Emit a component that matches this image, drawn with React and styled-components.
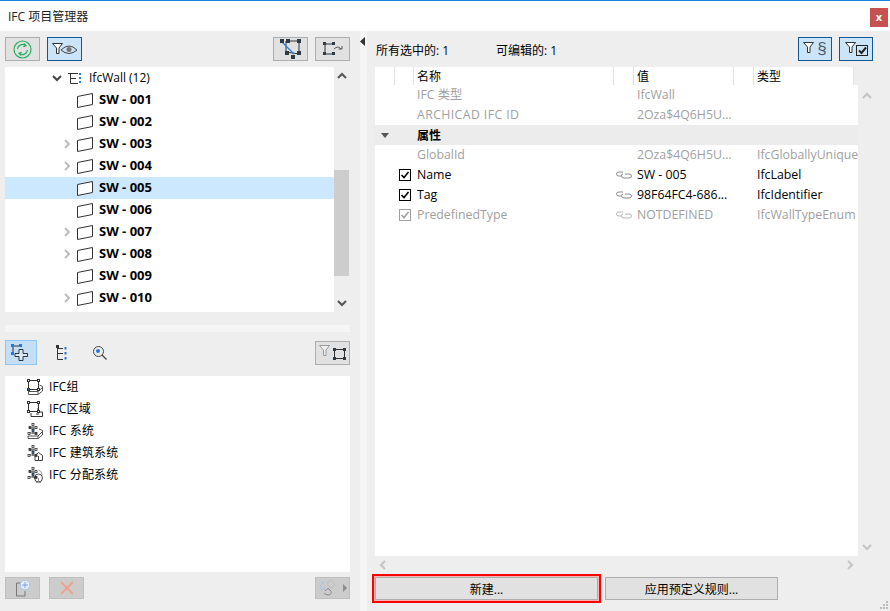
import React from 'react';
import styled, { createGlobalStyle } from 'styled-components';

const GlobalStyle = createGlobalStyle`
  html, body {
    margin: 0;
    padding: 0;
    background: #fff;
  }
  body {
    font-family: 'Open Sans', 'Noto Sans CJK SC', sans-serif;
    font-size: 12px;
    color: #000;
    overflow: hidden;
  }
`;

const Window = styled.div`
  position: relative;
  width: 890px;
  height: 611px;
  display: flex;
  flex-direction: column;
  border-top: 1px solid #1883d7;
  box-sizing: border-box;
  background: #eee;
`;

const TitleBar = styled.div`
  height: 30px;
  flex: none;
  background: #fff;
  display: flex;
  align-items: center;
  justify-content: space-between;
  padding: 0 2px 0 8px;
  color: #222;
`;

const CloseButton = styled.div`
  width: 18px;
  height: 19px;
  background: #c75050;
  color: #fff;
  font-weight: 700;
  font-size: 11px;
  line-height: 17px;
  text-align: center;
  margin-top: 3px;
`;

const Body = styled.div`
  flex: 1;
  display: flex;
  min-height: 0;
`;

const LeftPane = styled.div`
  width: 345px;
  flex: none;
  padding: 6px 10px 0 5px;
  display: flex;
  flex-direction: column;
`;

const Splitter = styled.div`
  width: 7px;
  flex: none;
  background: #f5f5f5;
  display: flex;
  justify-content: center;
  padding-top: 6px;
`;

const Toolbar = styled.div`
  display: flex;
  align-items: center;
  height: ${p => p.$height || 24}px;
  gap: ${p => p.$gap || 7}px;
  flex: none;
`;

const Spacer = styled.div`
  flex: 1;
`;

const ToolButton = styled.div`
  width: ${p => p.$width || 35}px;
  height: ${p => p.$height || 24}px;
  box-sizing: border-box;
  flex: none;
  display: flex;
  align-items: center;
  justify-content: center;
  border: 1px solid ${p => (p.$active ? '#0f5a96' : '#adadad')};
  background: ${p => (p.$active ? '#cce4f7' : '#e1e1e1')};
`;

const DisabledButton = styled(ToolButton)`
  height: 22px;
  background: #cccccc;
  border-color: #bfbfbf;
`;

const SectionMark = styled.span`
  font-family: 'Liberation Sans', sans-serif;
  font-size: 17px;
  line-height: 18px;
  color: #4a5a68;
  margin-left: 3px;
`;

const TabButton = styled.div`
  width: ${p => p.$width}px;
  height: 25px;
  flex: none;
  box-sizing: border-box;
  display: flex;
  align-items: center;
  justify-content: center;
  border: ${p => (p.$active ? '1px solid #8fc6f2' : 'none')};
  background: ${p => (p.$active ? '#c3def5' : 'transparent')};
`;

const TreePanel = styled.div`
  margin-top: 6px;
  height: 245px;
  flex: none;
  display: flex;
`;

const Tree = styled.div`
  flex: 1;
  background: #fff;
  overflow: hidden;
`;

const TreeRow = styled.div`
  height: 22px;
  display: flex;
  align-items: center;
  padding-left: ${p => p.$indent}px;
  background: ${p => (p.$selected ? '#cce8ff' : 'transparent')};
`;

const ChevronSlot = styled.div`
  width: ${p => p.$width}px;
  flex: none;
  display: flex;
  align-items: center;
`;

const RowLabel = styled.span`
  margin-left: ${p => p.$gap}px;
  margin-bottom: 1px;
  white-space: nowrap;
`;

const WallLabel = styled(RowLabel)`
  font-size: 13px;
  font-weight: 700;
  margin-bottom: 2px;
`;

const ListLabel = styled(RowLabel)`
  margin-bottom: 2px;
  letter-spacing: 0.15px;
`;

const ScrollColumn = styled.div`
  width: ${p => p.$width}px;
  flex: none;
  display: flex;
  flex-direction: column;
  align-items: stretch;
`;

const ScrollArrow = styled.div`
  height: 18px;
  flex: none;
  display: flex;
  align-items: center;
  justify-content: center;
  margin-top: ${p => (p.$bottom ? 'auto' : `${p.$inset || 0}px`)};
  margin-bottom: ${p => (p.$bottom ? `${p.$inset || 0}px` : '0')};
`;

const ScrollThumb = styled.div`
  height: 106px;
  width: 15px;
  background: #cdcdcd;
  margin-top: 85px;
`;

const SplitBand = styled.div`
  height: 7px;
  margin: 13px 0 8px;
  background: #f5f5f5;
  flex: none;
`;

const ListPanel = styled.div`
  margin-top: 11px;
  height: 196px;
  flex: none;
  background: #fff;
`;

const BottomBar = styled(Toolbar)`
  margin-top: 5px;
  height: 22px;
  gap: 9px;
`;

const RightPane = styled.div`
  flex: 1;
  display: flex;
  flex-direction: column;
  padding: 6px 0 0 8px;
  min-width: 0;
`;

const SummaryBar = styled.div`
  height: 24px;
  flex: none;
  display: flex;
  align-items: center;
  padding-right: 17px;
`;

const SummaryText = styled.span`
  width: ${p => p.$width}px;
  padding-left: 1px;
  box-sizing: border-box;
  margin-top: 2px;
`;

const SummaryButtons = styled.div`
  margin-left: auto;
  display: flex;
  gap: 7px;
`;

const TablePanel = styled.div`
  margin-top: 6px;
  display: flex;
  height: 507px;
  flex: none;
`;

const Table = styled.div`
  width: 483px;
  flex: none;
  display: flex;
  flex-direction: column;
`;

const columns = '20px 19px 200px 20px 100px 20px 1fr';

const HeaderRow = styled.div`
  height: 18px;
  width: 479px;
  flex: none;
  display: grid;
  grid-template-columns: ${columns};
  background: #fff;
`;

const HeaderCell = styled.div`
  border-right: 1px solid #e3e3e3;
  padding-left: 3px;
  line-height: 19px;
  overflow: hidden;
`;

const Rows = styled.div`
  flex: 1;
  background: #fff;
  overflow: hidden;
`;

const Row = styled.div`
  height: 20px;
  display: grid;
  grid-template-columns: ${columns};
  align-items: center;
  white-space: nowrap;
  background: ${p => (p.$band ? '#ececec' : 'transparent')};
  color: ${p => (p.$muted ? '#a0a0a0' : '#000')};
`;

const Cell = styled.div`
  padding: 0 0 2px 3px;
  overflow: hidden;
  display: flex;
  align-items: center;
  font-size: 12.3px;
  letter-spacing: ${p => p.$spacing || 0}px;
`;

const BandTitle = styled.div`
  padding-left: 3px;
  font-weight: 600;
`;

const WideCell = styled(Cell)`
  grid-column: span 2;
`;

const IconCell = styled.div`
  display: flex;
  align-items: center;
  justify-content: center;
`;

const HScroll = styled.div`
  width: 483px;
  height: 18px;
  flex: none;
  display: flex;
  align-items: center;
  justify-content: space-between;
  padding: 0 3px;
  box-sizing: border-box;
`;

const ActionBar = styled.div`
  display: flex;
  gap: 7px;
  margin-top: 3px;
`;

const ActionButton = styled.div`
  height: 23px;
  width: ${p => p.$width}px;
  box-sizing: border-box;
  flex: none;
  border: 1px solid #adadad;
  background: #e1e1e1;
  display: flex;
  align-items: center;
  justify-content: center;
  outline: ${p => (p.$marked ? '2px solid #f00' : 'none')};
  outline-offset: 1px;
  box-shadow: ${p => (p.$marked ? '0 0 0 1px #ffb4b4' : 'none')};
`;

const ResizeGrip = styled.svg`
  position: absolute;
  right: 1px;
  bottom: 1px;
`;

const SplitArrowIcon = styled.svg`
  margin-left: -2px;
`;

const Chevron = ({ dir = 'right', color = '#bdbdbd', size = 10, width = 2 }) => {
  const d = {
    right: 'M3 1 L7 5 L3 9',
    left: 'M7 1 L3 5 L7 9',
    up: 'M1 7 L5 3 L9 7',
    down: 'M1 3 L5 7 L9 3',
  }[dir];
  return (
    <svg width={size} height={size} viewBox="0 0 10 10" fill="none">
      <path d={d} stroke={color} strokeWidth={width} />
    </svg>
  );
};

const WallIcon = () => (
  <svg width="16" height="15" viewBox="0 0 16 15" fill="#fff" stroke="#333" strokeWidth="1">
    <path d="M0.5 3.5 L15.5 0.5 V11.5 L0.5 14.5 Z" />
  </svg>
);

const WallTypeIcon = () => (
  <svg width="13" height="11" viewBox="0 0 13 11" fill="none">
    <path d="M0 0.5 H10 M2.5 0.5 V10.5 H10 M2.5 5.5 H8" stroke="#333" />
    <path d="M12 0 V2 M12 4 V6 M12 8 V10" stroke="#1e7be0" strokeWidth="2" />
  </svg>
);

const RefreshIcon = () => (
  <svg width="19" height="19" viewBox="0 0 19 19" fill="none" stroke="#27ae60" strokeWidth="1.2">
    <circle cx="9.5" cy="9.5" r="8.5" />
    <path d="M4.5 9 A5 5 0 0 1 12.5 5.5 M11 3.5 L13 5.8 L10.3 6.6" />
    <path d="M14.5 10 A5 5 0 0 1 6.5 13.5 M8 15.5 L6 13.2 L8.7 12.4" />
  </svg>
);

const Funnel = ({ color = '#333' }) => (
  <path d="M0.5 0.5 H10.5 L7 5 V10.5 H4.5 V5 Z" fill="#fff" stroke={color} />
);

const FilterEyeIcon = () => (
  <svg width="26" height="13" viewBox="0 0 26 13" fill="none">
    <Funnel />
    <path d="M9 7 Q17 -1 25 7 Q17 14 9 7 Z" stroke="#444" />
    <circle cx="17" cy="6.5" r="2.5" fill="#777" />
  </svg>
);

const FunnelIcon = () => (
  <svg width="11" height="14" viewBox="0 0 11 14" fill="none">
    <Funnel />
  </svg>
);

const FilterCheckIcon = () => (
  <svg width="23" height="14" viewBox="0 0 23 14" fill="none">
    <Funnel />
    <rect x="11.5" y="3.5" width="11" height="10" fill="#cce4f7" stroke="#222" />
    <path d="M14 8.5 L16.5 11 L21 5.5" stroke="#222" strokeWidth="2" />
  </svg>
);

const Handle = ({ x, y, color = '#2b3a45', size = 3 }) => (
  <rect x={x} y={y} width={size} height={size} fill={color} />
);

const PolyEditIcon = () => (
  <svg width="21" height="20" viewBox="0 0 21 20" fill="none">
    <path d="M6 2 H19 V15 L6 13 Z" stroke="#333" />
    <path d="M1 2 L14 15" stroke="#2a7de1" strokeWidth="1.3" />
    <Handle x={0} y={0} size={4} />
    <Handle x={6} y={0} size={4} />
    <Handle x={17} y={0} size={4} />
    <Handle x={5} y={12} size={4} />
    <Handle x={17} y={12} size={4} />
    <Handle x={11} y={16} size={4} />
  </svg>
);

const PolyArrowIcon = () => (
  <svg width="20" height="14" viewBox="0 0 20 14" fill="none">
    <path d="M2 2 H11 M2 2 V12 H11" stroke="#333" />
    <Handle x={0} y={0} />
    <Handle x={9} y={0} />
    <Handle x={0} y={10} />
    <Handle x={9} y={10} />
    <path d="M11 7 Q15 3 18 7 M15.5 7 H19 V4" stroke="#555" />
  </svg>
);

const AddElementIcon = () => (
  <svg width="20" height="17" viewBox="0 0 20 17" fill="none">
    <path d="M2 2 H10 M2 2 V9" stroke="#333" />
    <Handle x={0} y={0} color="#1e7be0" />
    <Handle x={8} y={0} color="#1e7be0" />
    <Handle x={0} y={8} color="#1e7be0" />
    <path d="M8 5.5 H12 V9.5 H16.5 V12.5 H12 V16.5 H8 V12.5 H4 V9.5 H8 Z" fill="#d8e9f8" stroke="#333" />
  </svg>
);

const HierarchyIcon = () => (
  <svg width="11" height="15" viewBox="0 0 11 15" fill="none">
    <rect x="0" y="0" width="3" height="3" fill="#333" />
    <path d="M1.5 3 V14.5 H7 M1.5 8.5 H7 M1.5 3.5 H7" stroke="#333" />
    <path d="M9.5 2 V4.5 M9.5 7 V9.5 M9.5 12 V14.5" stroke="#1e7be0" strokeWidth="2" />
  </svg>
);

const SearchIcon = () => (
  <svg width="14" height="14" viewBox="0 0 14 14" fill="none">
    <circle cx="5.5" cy="5.5" r="5" stroke="#444" />
    <circle cx="5" cy="5" r="2" fill="#1e7be0" />
    <path d="M9 9 L13.5 13.5" stroke="#444" strokeWidth="1.2" />
  </svg>
);

const FilterNodesIcon = () => (
  <svg width="28" height="16" viewBox="0 0 28 16" fill="none">
    <path d="M0.5 0.5 H10.5 L7 5 V10.5 H4.5 V5 Z" fill="#f0f0f0" stroke="#999" />
    <path d="M15.5 4.5 H25.5 V13.5 H15.5 Z" stroke="#333" />
    <Handle x={14} y={3} size={3} />
    <Handle x={24} y={3} size={3} />
    <Handle x={14} y={12} size={3} />
    <Handle x={24} y={12} size={3} />
  </svg>
);

const Corners = ({ blue }) => (
  <>
    <rect x="1.5" y="1.5" width="10" height="9" stroke="#333" fill="none" />
    <rect x="0.5" y="0.5" width="2" height="2" stroke="#333" fill="#fff" />
    <rect x="10.5" y="0.5" width="2" height="2" stroke="#333" fill="#fff" />
    <rect x="0.5" y="9.5" width="2" height="2" stroke="#333" fill={blue ? '#1e7be0' : '#fff'} />
    <rect x="10.5" y="9.5" width="2" height="2" stroke="#333" fill="#fff" />
  </>
);

const Network = () => (
  <g stroke="#333" strokeWidth="0.8">
    <path d="M6 2 V11 M2 5 H10 M2 10 H10" fill="none" />
    <rect x="5" y="0.5" width="2" height="2" fill="#fff" />
    <rect x="2" y="3.5" width="2" height="2" fill="#444" />
    <rect x="8" y="3.5" width="2" height="2" fill="#fff" />
    <rect x="5" y="6.5" width="2" height="2" fill="#1e7be0" />
    <rect x="1" y="9.5" width="2" height="2" fill="#fff" />
    <rect x="8" y="9.5" width="2" height="2" fill="#444" />
  </g>
);

const GroupIcon = () => (
  <svg width="16" height="16" viewBox="0 0 16 16" fill="none">
    <path d="M1.5 11 V15.5 H11 L15.5 12 V7.5 L12.5 6 M1.5 12.5 H11 L15 9 M11 12.5 V15.5" stroke="#555" />
    <Corners blue />
  </svg>
);

const ZoneIcon = () => (
  <svg width="16" height="16" viewBox="0 0 16 16" fill="none">
    <path d="M4 12 V15.5 H15.5 V11 H11 V7 M9 13 H12" stroke="#333" />
    <Corners />
  </svg>
);

const SystemBoxIcon = () => (
  <svg width="16" height="16" viewBox="0 0 16 16" fill="none">
    <path d="M1 13 V15.5 H11 L15.5 12 V7.5 L12 6 M1 13 H11 L15 9 M11 13 V15.5" stroke="#555" />
    <Network />
  </svg>
);

const SystemHouseIcon = () => (
  <svg width="16" height="16" viewBox="0 0 16 16" fill="none">
    <path d="M8 15.5 H15.5 V10.5 L11.5 7.5 L8 10.5 Z M11.5 11 V15.5" stroke="#444" />
    <Network />
  </svg>
);

const SystemPipeIcon = () => (
  <svg width="16" height="16" viewBox="0 0 16 16" fill="none">
    <circle cx="11.5" cy="11" r="4" stroke="#444" />
    <path d="M9 15.5 H14 M11.5 3 Q15 4 15 8 M11.5 11 V15.5" stroke="#999" />
    <Network />
  </svg>
);

const NewItemIcon = () => (
  <svg width="16" height="17" viewBox="0 0 16 17" fill="none">
    <path d="M6 3 H1.5 V16 H10 V11" stroke="#777" />
    <circle cx="10" cy="5" r="4.8" fill="#e4eefa" stroke="#a8c4ea" />
    <path d="M7 5 H13 M10 2 V8" stroke="#7fa3d8" />
  </svg>
);

const DeleteIcon = () => (
  <svg width="14" height="14" viewBox="0 0 14 14" fill="none">
    <path d="M1 1 L13 13 M13 1 L1 13" stroke="#ef9f8c" strokeWidth="1.8" />
  </svg>
);

const MoreIcon = () => (
  <svg width="31" height="16" viewBox="0 0 31 16" fill="none">
    <path d="M7 2 A5 5 0 0 0 5 10 Q7 10 8 7" stroke="#a8c4ea" strokeWidth="1.2" />
    <circle cx="14" cy="4" r="3.5" stroke="#bdbdbd" />
    <path d="M8 11 Q11 7 13 10 Q16 13 12 15 Q8 15 7 13" stroke="#888" />
    <path d="M26 4 L30 8 L26 12 Z" fill="#8c8c8c" />
  </svg>
);

const LinkIcon = ({ color = '#8a8a8a' }) => (
  <svg width="16" height="8" viewBox="0 0 16 8" fill="none" stroke={color}>
    <path d="M7 1 H3 Q0.5 1 0.5 3 Q0.5 5 3 5 H5" />
    <path d="M9 3 H13 Q15.5 3 15.5 5 Q15.5 7 13 7 H8 Q5.5 7 5.5 5 Q5.5 3 7 3" />
  </svg>
);

const CheckBox = ({ muted }) => (
  <svg width="12" height="12" viewBox="0 0 12 12" fill="#fff">
    <rect x="0.5" y="0.5" width="11" height="11" stroke={muted ? '#a0a0a0' : '#000'} />
    <path d="M2.5 6 L5 8.5 L9.5 3" fill="none" stroke={muted ? '#a0a0a0' : '#000'} strokeWidth="1.6" />
  </svg>
);

const CollapseIcon = () => (
  <svg width="8" height="5" viewBox="0 0 8 5">
    <path d="M0 0 H8 L4 5 Z" fill="#555" />
  </svg>
);

const SplitArrow = () => (
  <SplitArrowIcon width="5" height="9" viewBox="0 0 5 9">
    <path d="M5 0 V9 L0 4.5 Z" fill="#333" />
  </SplitArrowIcon>
);

const walls = [
  { name: 'SW - 001' },
  { name: 'SW - 002' },
  { name: 'SW - 003', more: true },
  { name: 'SW - 004', more: true },
  { name: 'SW - 005', selected: true },
  { name: 'SW - 006' },
  { name: 'SW - 007', more: true },
  { name: 'SW - 008', more: true },
  { name: 'SW - 009' },
  { name: 'SW - 010', more: true },
];

const systems = [
  { name: 'IFC组', Icon: GroupIcon },
  { name: 'IFC区域', Icon: ZoneIcon },
  { name: 'IFC 系统', Icon: SystemBoxIcon },
  { name: 'IFC 建筑系统', Icon: SystemHouseIcon },
  { name: 'IFC 分配系统', Icon: SystemPipeIcon },
];

const App = () => (
  <>
    <GlobalStyle />
    <Window>
      <TitleBar>
        <span>IFC 项目管理器</span>
        <CloseButton>x</CloseButton>
      </TitleBar>
      <Body>
        <LeftPane>
          <Toolbar>
            <ToolButton><RefreshIcon /></ToolButton>
            <ToolButton $active><FilterEyeIcon /></ToolButton>
            <Spacer />
            <ToolButton><PolyEditIcon /></ToolButton>
            <ToolButton><PolyArrowIcon /></ToolButton>
          </Toolbar>
          <TreePanel>
            <Tree>
              <TreeRow $indent={47}>
                <ChevronSlot $width={16}><Chevron dir="down" color="#444" /></ChevronSlot>
                <WallTypeIcon />
                <RowLabel $gap={8}>IfcWall (12)</RowLabel>
              </TreeRow>
              {walls.map(wall => (
                <TreeRow key={wall.name} $indent={57} $selected={wall.selected}>
                  <ChevronSlot $width={15}>{wall.more && <Chevron />}</ChevronSlot>
                  <WallIcon />
                  <WallLabel $gap={6}>{wall.name}</WallLabel>
                </TreeRow>
              ))}
            </Tree>
            <ScrollColumn $width={16}>
              <ScrollArrow><Chevron dir="up" color="#555" /></ScrollArrow>
              <ScrollThumb />
              <ScrollArrow $bottom><Chevron dir="down" color="#555" /></ScrollArrow>
            </ScrollColumn>
          </TreePanel>
          <SplitBand />
          <Toolbar $height={25} $gap={0}>
            <TabButton $active $width={32}><AddElementIcon /></TabButton>
            <TabButton $width={34}><HierarchyIcon /></TabButton>
            <TabButton $width={30}><SearchIcon /></TabButton>
            <Spacer />
            <ToolButton><FilterNodesIcon /></ToolButton>
          </Toolbar>
          <ListPanel>
            {systems.map(({ name, Icon }) => (
              <TreeRow key={name} $indent={22}>
                <Icon />
                <ListLabel $gap={6}>{name}</ListLabel>
              </TreeRow>
            ))}
          </ListPanel>
          <BottomBar>
            <DisabledButton><NewItemIcon /></DisabledButton>
            <DisabledButton><DeleteIcon /></DisabledButton>
            <Spacer />
            <DisabledButton><MoreIcon /></DisabledButton>
          </BottomBar>
        </LeftPane>
        <Splitter><SplitArrow /></Splitter>
        <RightPane>
          <SummaryBar>
            <SummaryText $width={120}>所有选中的: 1</SummaryText>
            <SummaryText $width={120}>可编辑的: 1</SummaryText>
            <SummaryButtons>
              <ToolButton $active $width={34}><FunnelIcon /><SectionMark>§</SectionMark></ToolButton>
              <ToolButton $active $width={34}><FilterCheckIcon /></ToolButton>
            </SummaryButtons>
          </SummaryBar>
          <TablePanel>
            <Table>
              <HeaderRow>
                <HeaderCell />
                <HeaderCell />
                <HeaderCell>名称</HeaderCell>
                <HeaderCell />
                <HeaderCell>值</HeaderCell>
                <HeaderCell />
                <HeaderCell>类型</HeaderCell>
              </HeaderRow>
              <Rows>
                <Row $muted>
                  <span /><span />
                  <Cell>IFC 类型</Cell>
                  <span />
                  <WideCell>IfcWall</WideCell>
                </Row>
                <Row $muted>
                  <span /><span />
                  <Cell $spacing={0.4}>ARCHICAD IFC ID</Cell>
                  <span />
                  <WideCell>2Oza$4Q6H5U...</WideCell>
                </Row>
                <Row $band>
                  <IconCell><CollapseIcon /></IconCell>
                  <span />
                  <BandTitle>属性</BandTitle>
                </Row>
                <Row $muted>
                  <span /><span />
                  <Cell>GlobalId</Cell>
                  <span />
                  <WideCell>2Oza$4Q6H5U...</WideCell>
                  <Cell>IfcGloballyUnique</Cell>
                </Row>
                <Row>
                  <span />
                  <IconCell><CheckBox /></IconCell>
                  <Cell>Name</Cell>
                  <IconCell><LinkIcon /></IconCell>
                  <WideCell>SW - 005</WideCell>
                  <Cell>IfcLabel</Cell>
                </Row>
                <Row>
                  <span />
                  <IconCell><CheckBox /></IconCell>
                  <Cell>Tag</Cell>
                  <IconCell><LinkIcon /></IconCell>
                  <WideCell>98F64FC4-686...</WideCell>
                  <Cell>IfcIdentifier</Cell>
                </Row>
                <Row $muted>
                  <span />
                  <IconCell><CheckBox muted /></IconCell>
                  <Cell>PredefinedType</Cell>
                  <IconCell><LinkIcon color="#b5b5b5" /></IconCell>
                  <WideCell>NOTDEFINED</WideCell>
                  <Cell>IfcWallTypeEnum</Cell>
                </Row>
              </Rows>
              <HScroll>
                <Chevron dir="left" color="#c4c4c4" />
                <Chevron dir="right" color="#c4c4c4" />
              </HScroll>
            </Table>
            <ScrollColumn $width={17}>
              <ScrollArrow $inset={20}><Chevron dir="up" color="#c4c4c4" /></ScrollArrow>
              <ScrollArrow $bottom $inset={18}><Chevron dir="down" color="#c4c4c4" /></ScrollArrow>
            </ScrollColumn>
          </TablePanel>
          <ActionBar>
            <ActionButton $width={223} $marked>新建...</ActionButton>
            <ActionButton $width={173}>应用预定义规则...</ActionButton>
          </ActionBar>
        </RightPane>
      </Body>
      <ResizeGrip width="10" height="10" viewBox="0 0 10 10">
        <path d="M7 1h2v2H7z M4 4h2v2H4z M7 4h2v2H7z M1 7h2v2H1z M4 7h2v2H4z M7 7h2v2H7z" fill="#bdbdbd" />
      </ResizeGrip>
    </Window>
  </>
);

export default App;
